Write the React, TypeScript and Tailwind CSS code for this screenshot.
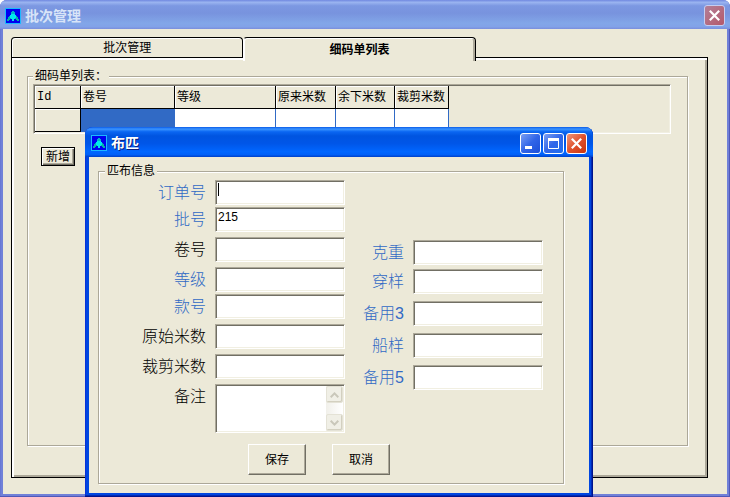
import React, { useState } from "react";

const tabs = ["批次管理", "细码单列表"];

const columns = [
    { title: "Id", width: "w-[46px]" },
    { title: "卷号", width: "w-[94px]" },
    { title: "等级", width: "w-[101px]" },
    { title: "原来米数", width: "w-[60px]" },
    { title: "余下米数", width: "w-[59px]" },
    { title: "裁剪米数", width: "w-[54px]" },
];

const leftFields = [
    { name: "orderNo", label: "订单号", linked: true, space: "", caret: true },
    { name: "batchNo", label: "批号", linked: true, space: "mt-0.5" },
    { name: "rollNo", label: "卷号", linked: false, space: "mt-[5px]" },
    { name: "grade", label: "等级", linked: true, space: "mt-[5px]" },
    { name: "styleNo", label: "款号", linked: true, space: "mt-0.5" },
    { name: "originalMeters", label: "原始米数", linked: false, space: "mt-[5px]" },
    { name: "cutMeters", label: "裁剪米数", linked: false, space: "mt-[5px]" },
];

const rightFields = [
    { name: "weight", label: "克重", linked: true, space: "" },
    { name: "wearSample", label: "穿样", linked: true, space: "mt-1" },
    { name: "spare3", label: "备用3", linked: true, space: "mt-[7px]" },
    { name: "shipSample", label: "船样", linked: true, space: "mt-[7px]" },
    { name: "spare5", label: "备用5", linked: true, space: "mt-[7px]" },
];

const sunken =
    "border border-t-[#aca899] border-l-[#aca899] border-r-white border-b-white shadow-[inset_1px_1px_0_#716f64,inset_-1px_-1px_0_#f1efe2]";
const groupBox = "min-w-0 border border-[#aca899] shadow-[1px_1px_0_#fff,inset_1px_1px_0_#fff]";

const AppIcon = () => (
    <svg width="16" height="16" viewBox="0 0 16 16" shapeRendering="crispEdges" className="shrink-0">
        <rect width="16" height="16" fill="#1cb8ff" />
        <rect x="1" y="1" width="14" height="14" fill="#0000f0" />
        <path d="M7 3h2v1h1v2h-1v1h-2v-1h-1v-2h1z" fill="#00b4c8" />
        <path d="M6 6h4v1h1v3h-1v1h-1v2h-2v-2h-1v-1h-1v-3h1z" fill="#00e8f0" />
        <path d="M4 8h1v2h1v1h-1v1h-1v1h-2v-2h1v-2h1z" fill="#00b4a8" />
        <path d="M11 8h1v1h1v2h1v2h-2v-1h-1v-1h-1v-1h1z" fill="#00b4a8" />
    </svg>
);

interface CaptionButtonProps {
    kind: "min" | "max" | "close";
    dim?: boolean;
}

const captionColors = {
    min: "border-white bg-linear-to-br from-[#7a9df2] via-[#3165e8] to-[#1c4fd8]",
    max: "border-white bg-linear-to-br from-[#7a9df2] via-[#3165e8] to-[#1c6ff0]",
    close: "border-white bg-linear-to-br from-[#ec9478] via-[#e0512c] to-[#c8340c]",
};

const captionNames = { min: "最小化", max: "最大化", close: "关闭" };

const CaptionButton = ({ kind, dim }: CaptionButtonProps) => (
    <button
        type="button"
        aria-label={captionNames[kind]}
        className={`flex size-[21px] shrink-0 items-center justify-center rounded-[3px] border ${
            dim ? "border-[#c6cdf0] bg-linear-to-br from-[#b27f98] to-[#b4586a]" : captionColors[kind]
        }`}
    >
        <svg width="19" height="19" viewBox="0 0 19 19" fill="none" stroke="#fff">
            {kind === "min" && <path d="M4 13.5h7" strokeWidth="3" />}
            {kind === "max" && (
                <>
                    <path d="M4 5.5h11" strokeWidth="3" />
                    <path d="M4.5 5v9.5h10V5" />
                </>
            )}
            {kind === "close" && <path d="M4.8 4.8l9.4 9.4M14.2 4.8l-9.4 9.4" strokeWidth="2.2" />}
        </svg>
    </button>
);

interface Field {
    name: string;
    label: string;
    linked: boolean;
    space: string;
    caret?: boolean;
}

interface FieldRowProps {
    field: Field;
    value: string;
    onChange: (e: React.ChangeEvent<HTMLInputElement>) => void;
}

const FieldRow = ({ field, value, onChange }: FieldRowProps) => (
    <div className={`flex items-center gap-[9px] ${field.space}`}>
        <label
            htmlFor={field.name}
            className={`flex-1 text-right text-[16px] leading-[25px] font-light ${field.linked ? "text-[#316ac5]" : "text-black"}`}
        >
            {field.label}
        </label>
        <div className="relative">
            <input
                type="text"
                id={field.name}
                name={field.name}
                value={value}
                onChange={onChange}
                className={`block h-[25px] w-[130px] bg-white px-0.5 pb-1.5 text-[12px] outline-none ${sunken}`}
            />
            {field.caret && <span className="absolute top-[3px] left-[3px] h-[13px] w-px bg-black" />}
        </div>
    </div>
);

const ScrollArrow = ({ up }: { up?: boolean }) => (
    <button
        type="button"
        disabled
        aria-label={up ? "向上滚动" : "向下滚动"}
        className="flex h-[17px] items-center justify-center rounded-[2px] border border-[#e4e2d6] bg-[#f0efe6] shadow-[inset_-1px_-1px_0_#d3d0c0]"
    >
        <svg width="9" height="6" viewBox="0 0 9 6" fill="none" stroke="#c9c7ba" strokeWidth="2">
            <path d={up ? "M.7 5.2l3.8-3.8 3.8 3.8" : "M.7 .8l3.8 3.8 3.8-3.8"} />
        </svg>
    </button>
);

const FabricDialog = () => {
    const [formData, setFormData] = useState<Record<string, string>>({ batchNo: "215" });

    const handleChange = (e: React.ChangeEvent<HTMLInputElement | HTMLTextAreaElement>) => {
        setFormData({ ...formData, [e.target.name]: e.target.value });
    };

    const renderField = (field: Field) => (
        <FieldRow key={field.name} field={field} value={formData[field.name] || ""} onChange={handleChange} />
    );

    return (
        <div
            role="dialog"
            aria-label="布匹"
            className="absolute top-[127px] left-[85px] w-[508px] rounded-t-[8px] bg-[#0046e0] px-1 pb-1 shadow-[inset_-1px_-1px_0_#00138c,inset_-2px_-2px_0_#0029b4,inset_1px_0_0_#0831d9]"
        >
            <div className="-mx-1 flex h-[30px] items-center gap-0.5 rounded-t-[8px] bg-[linear-gradient(to_bottom,#0a5ce8_0%,#3a94ff_7%,#0a66f2_16%,#0054e0_30%,#0056e8_55%,#0066ff_82%,#0060f8_92%,#0040c8_100%)] pt-0.5 pr-1.5 pl-1.5">
                <AppIcon />
                <h2 className="ml-0.5 flex-1 text-[14px] leading-[20px] font-bold text-white [text-shadow:1px_1px_0_#0a1e80]">布匹</h2>
                <CaptionButton kind="min" />
                <CaptionButton kind="max" />
                <CaptionButton kind="close" />
            </div>
            <form onSubmit={(e) => e.preventDefault()} className="bg-[#ece9d8] pt-1.5 pr-[25px] pb-[9px] pl-[9px]">
                <fieldset className={`px-1.5 pt-px pb-2 ${groupBox}`}>
                    <legend className="bg-[#ece9d8] px-0.5 text-[12px] leading-[16px]">匹布信息</legend>
                    <div className="flex">
                        <div className="w-[240px]">
                            {leftFields.map(renderField)}

                            {/* Remark */}
                            <div className="mt-[5px] flex gap-[9px]">
                                <label htmlFor="remark" className="flex-1 text-right text-[16px] leading-[25px] font-light">
                                    备注
                                </label>
                                <div className={`flex h-[49px] w-[130px] bg-white p-px ${sunken}`}>
                                    <textarea
                                        id="remark"
                                        name="remark"
                                        value={formData.remark || ""}
                                        onChange={handleChange}
                                        className="min-w-0 flex-1 resize-none overflow-hidden px-0.5 text-[12px] outline-none"
                                    />
                                    <div className="flex w-[17px] flex-col justify-between bg-linear-to-r from-[#f1f0ea] to-white">
                                        <ScrollArrow up />
                                        <ScrollArrow />
                                    </div>
                                </div>
                            </div>
                        </div>
                        <div className="w-[198px] pt-[60px]">{rightFields.map(renderField)}</div>
                    </div>

                    {/* Actions */}
                    <div className="mt-[11px] flex gap-[26px] pl-[143px]">
                        {["保存", "取消"].map((text) => (
                            <button
                                key={text}
                                type="button"
                                className="h-[31px] w-[58px] border border-t-white border-r-[#716f64] border-b-[#716f64] border-l-white text-[12px] shadow-[inset_-1px_-1px_0_#aca899]"
                            >
                                {text}
                            </button>
                        ))}
                    </div>
                </fieldset>
            </form>
        </div>
    );
};

const RollTable = () => (
    <table className="table-fixed border-separate border-spacing-0 w-[414px] text-[12px]">
        <thead>
            <tr>
                {columns.map((col) => (
                    <th
                        key={col.title}
                        className={`${col.width} h-[23px] overflow-hidden border-r border-b border-black p-0 pl-0.5 text-left font-normal whitespace-nowrap shadow-[inset_1px_1px_0_#fff] first:font-['Liberation_Mono']`}
                    >
                        {col.title}
                    </th>
                ))}
            </tr>
        </thead>
        <tbody>
            <tr>
                {columns.map((col, i) => (
                    <td
                        key={col.title}
                        className={`h-[23px] border-r p-0 ${
                            i === 0
                                ? "border-b border-black shadow-[inset_1px_1px_0_#fff]"
                                : i === 1
                                  ? "border-[#316ac5] bg-[#316ac5]"
                                  : "border-[#316ac5] bg-white"
                        }`}
                    />
                ))}
            </tr>
        </tbody>
    </table>
);

const App = () => {
    const [activeTab, setActiveTab] = useState(1);

    return (
        <div className="relative flex min-h-screen flex-col bg-white font-['Liberation_Sans','Noto_Sans_CJK_SC',sans-serif] text-black">
            <div className="flex flex-1 flex-col rounded-t-[7px] bg-[#7080d8] px-[3px] pb-[3px] shadow-[inset_-1px_-1px_0_#5058b8,inset_1px_0_0_#6878d4]">
                <div className="-mx-[3px] flex h-[29px] items-center gap-0.5 rounded-t-[7px] bg-[linear-gradient(to_bottom,#7088e0_0%,#9ab4f0_8%,#7c98e2_20%,#7893de_45%,#82a6e8_80%,#82a2e8_92%,#7a8edc_100%)] pt-0.5 pr-[5px] pl-[5px]">
                    <AppIcon />
                    <h1 className="ml-0.5 flex-1 text-[14px] leading-[20px] font-bold text-[#d8e4f8]">批次管理</h1>
                    <CaptionButton kind="close" dim />
                </div>

                <main className="flex flex-1 flex-col bg-[#ece9d8] pt-2 pr-[19px] pb-4 pl-2">
                    <div role="tablist" className="grid grid-cols-3">
                        {tabs.map((tab, i) => (
                            <button
                                key={tab}
                                type="button"
                                role="tab"
                                aria-selected={i === activeTab}
                                onClick={() => setActiveTab(i)}
                                className={`rounded-t-[4px] border border-b-0 border-black text-[12px] leading-[20px] ${
                                    i === activeTab
                                        ? "relative -mb-[3px] h-[24px] border-l-white bg-[#ece9d8] font-bold shadow-[inset_1px_1px_0_#fff,inset_-2px_0_0_#aca899]"
                                        : "h-[20px] shadow-[inset_1px_1px_0_#fff]"
                                }`}
                            >
                                {tab}
                            </button>
                        ))}
                    </div>

                    <div
                        role="tabpanel"
                        className="-mt-px flex flex-1 flex-col border border-black pt-[10px] pr-[19px] pb-[31px] pl-[15px] shadow-[inset_2px_2px_0_#fff,inset_-2px_-2px_0_#aca899]"
                    >
                        <fieldset className={`flex flex-1 flex-col pr-4 pb-[10px] pl-[5px] ${groupBox}`}>
                            <legend className="bg-[#ece9d8] px-0.5 text-[12px] leading-[16px]">细码单列表：</legend>
                            <div className={`flex-1 p-px ${sunken}`}>
                                <RollTable />
                            </div>
                            <div className="mt-[13px] flex pl-2">
                                <button
                                    type="button"
                                    className="h-[19px] w-[34px] border border-black text-[12px] leading-[16px] shadow-[inset_1px_1px_0_#fff,inset_-1px_-1px_0_#716f64,inset_-2px_-2px_0_#aca899]"
                                >
                                    新增
                                </button>
                            </div>
                        </fieldset>
                    </div>
                </main>
            </div>

            <FabricDialog />
        </div>
    );
};

export default App;
